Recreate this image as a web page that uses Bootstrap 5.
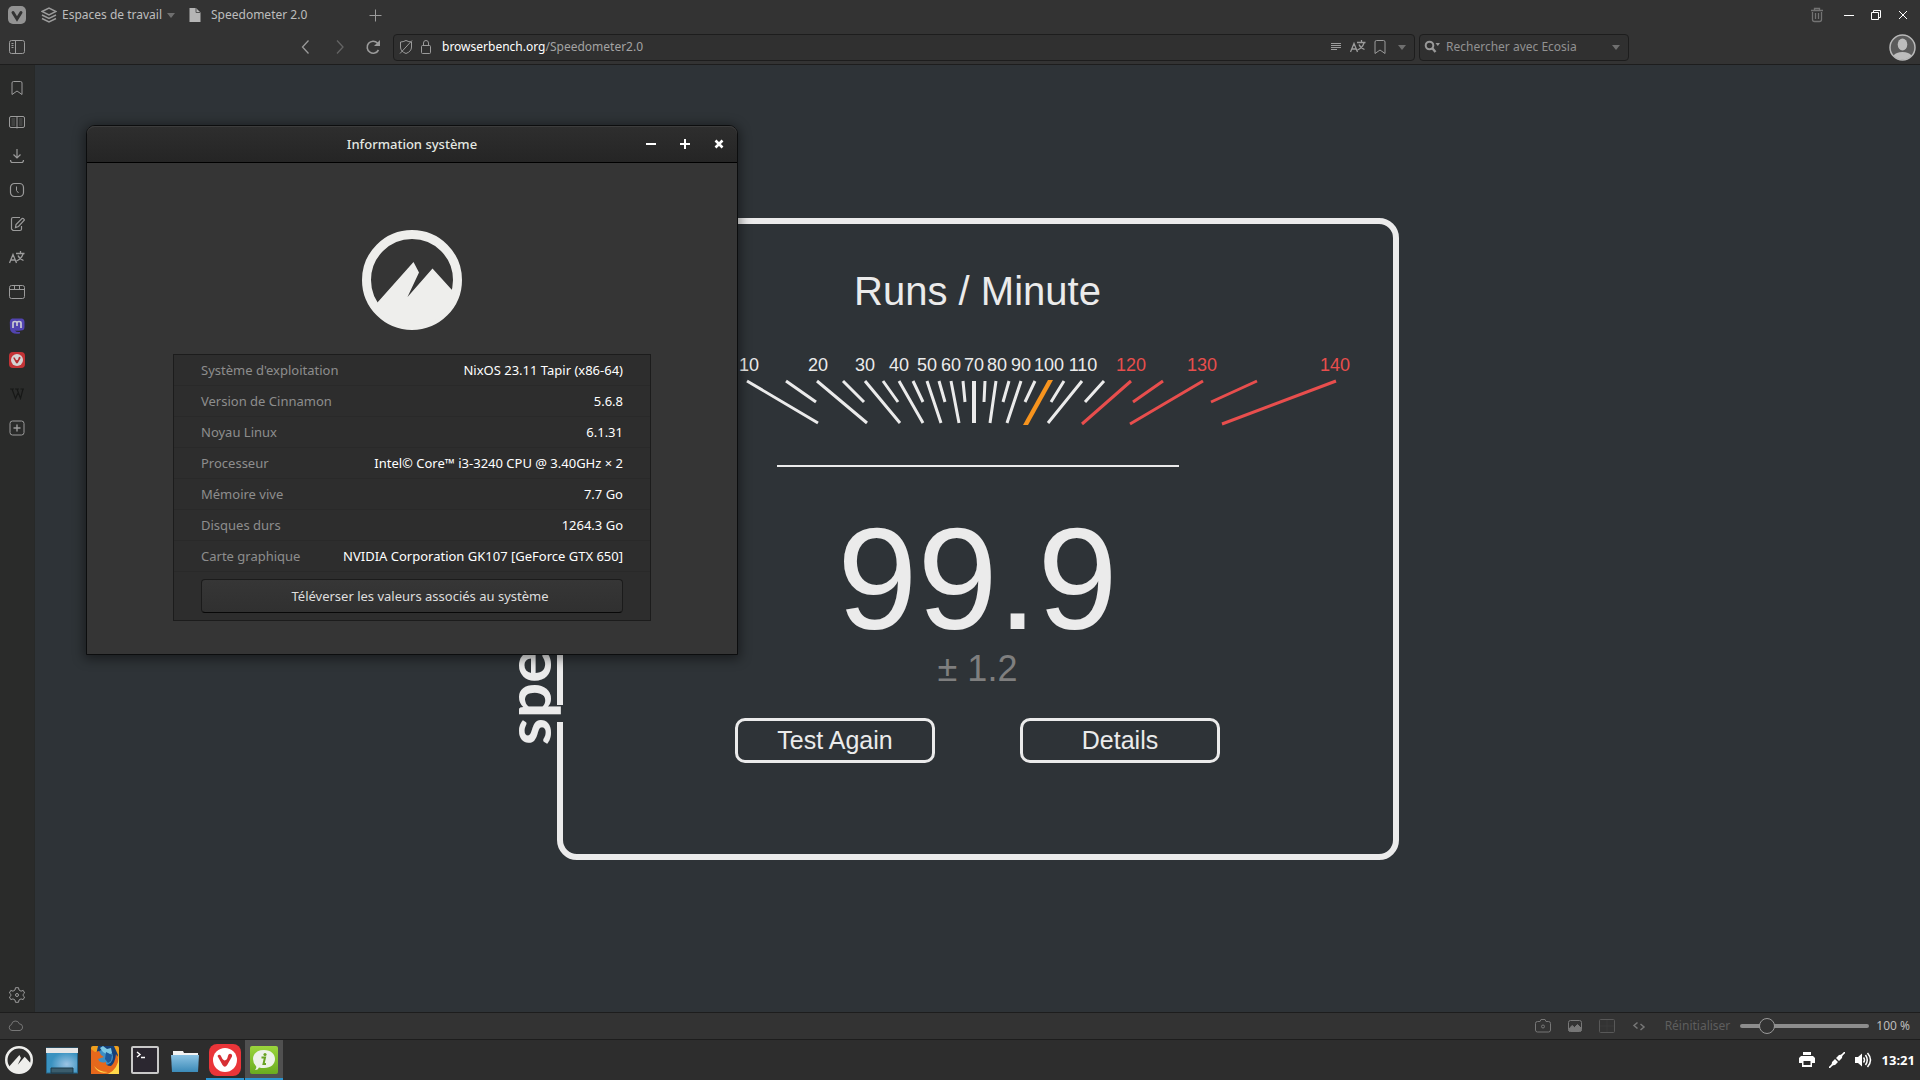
<!DOCTYPE html>
<html lang="fr" data-bs-theme="dark">
<head>
<meta charset="utf-8">
<meta name="viewport" content="width=device-width, initial-scale=1">
<title>Speedometer 2.0</title>
<link href="https://cdn.jsdelivr.net/npm/bootstrap@5.3.0/dist/css/bootstrap.min.css" rel="stylesheet">
<style>
:root { --fg: #ebebeb; --page: #2e3337; --chrome: #333333; --line: #1d1d1d; }
body { font-family: "Noto Sans", "Open Sans", sans-serif; font-size: 12px; line-height: 18px; color: #bdbdbd; background: var(--chrome); }
button { color: inherit; font: inherit; background: none; border: 0; padding: 0; }
svg { display: block; flex: none; }
.ico { width: 16px; height: 16px; fill: none; stroke: #9b9b9b; stroke-width: 1; }
.caret { width: 8px; height: 5px; fill: #6f6f6f; }
.tabstrip { height: 30px; padding: 0 6px 0 8px; }
.tabstrip .spaces { margin-left: 15px; gap: 5px; }
.tabstrip .page-tab { width: 162px; margin-left: 6px; padding-left: 6px; }
.toolbar { height: 34px; padding: 0 4px 0 9px; }
.nav-arrows { margin-left: 272px; gap: 18px; }
.field { height: 27px; border: 1px solid var(--line); border-radius: 4px; background: #303030; }
.field input { background: none; border: 0; outline: 0; color: #9a9a9a; padding: 0; min-width: 0; }
.field input::placeholder { color: #929292; opacity: 1; }
.address { margin-left: 12px; }
.page-tools { gap: 6px; }
.search { width: 210px; margin-right: 260px; gap: 6px; }
.host { color: #ffffff; }
.path { color: #a3a3a3; text-decoration: none; }
.wbtn { width: 23px; height: 20px; color: #fff; display: grid; place-items: center; }
.wbtn .ico { stroke: #ffffff; }
.side { width: 35px; background: #2a2b2a; border-right: 1px solid #272928; padding-top: 6px; }
.side button { width: 34px; height: 34px; display: grid; place-items: center; flex: none; }
.view { border-top: 1px solid var(--line); }
.meterpage { background: var(--page); font-family: "Liberation Sans", Arial, sans-serif; color: var(--fg); }
.frame { position: relative; width: 842px; height: 642px; border: 6px solid var(--fg); border-radius: 20px; padding-top: 44px; }
.frame h1 { font-size: 40px; line-height: 46px; font-weight: 400; margin: 0 0 31px; color: var(--fg); }
.gauge { width: 100%; height: 82px; stroke-width: 3; stroke: var(--fg); }
.gauge text { stroke: none; fill: var(--fg); font-family: "Liberation Sans", Arial, sans-serif; font-size: 18px; text-anchor: middle; }
.gauge .hot { stroke: #e84e4d; }
.gauge text.hot { stroke: none; fill: #e84e4d; }
.rule { width: 402px; height: 2px; background: var(--fg); margin: 38px auto 44px; }
.score { font-size: 144px; line-height: 137px; }
.delta { font-size: 36px; line-height: 42px; color: #7f7f7f; margin-bottom: 28px; }
.choices { gap: 85px; }
.choices button { width: 200px; height: 45px; border: 3px solid var(--fg); border-radius: 10px; font-size: 25px; line-height: 37px; color: var(--fg); }
.brand { position: absolute; right: 100%; bottom: 108px; margin-right: 4px; writing-mode: vertical-rl; transform: rotate(180deg); font-family: Lato, sans-serif; font-weight: 700; font-size: 62px; line-height: 64px; }
.notch { position: absolute; left: -6px; bottom: 132px; width: 6px; height: 17px; background: var(--page); }
.dialog-win { position: absolute; left: 86px; top: 125px; width: 652px; border: 1px solid #0c0d0e; border-radius: 9px 9px 0 0; background: #353535; box-shadow: 0 2px 12px 2px rgba(0,0,0,.45); color: #dedede; font-size: 13px; }
.dialog-win header { height: 37px; border-bottom: 1px solid #000; border-radius: 8px 8px 0 0; background: linear-gradient(#2e2e2e, #252525); box-shadow: inset 0 1px #3c3c3c; display: grid; grid-template-columns: 1fr auto 1fr; align-items: center; padding: 0 6px; }
.dialog-win h2 { font-size: 13px; line-height: 18px; font-weight: 500; margin: 0; color: #e4e8e2; grid-column: 2; }
.dialog-win header .ctl { gap: 10px; }
.dialog-win header button { width: 24px; height: 24px; display: grid; place-items: center; }
.dialog-win header .ico { stroke: #fff; stroke-width: 2; }
.dialog-body { padding: 67px 86px 33px; }
.cinn { width: 100px; height: 100px; margin: 0 auto 24px; }
.facts { background: #2d2d2d; border: 1px solid #1c1c1c; padding-bottom: 7px; }
.facts dl > div { height: 31px; padding: 0 27px; border-bottom: 1px solid #292929; }
.facts dt { font-weight: 400; color: #8d8d8d; }
.facts dd { margin: 0; color: #ffffff; }
.facts button { display: block; width: calc(100% - 54px); height: 34px; margin: 7px auto 0; padding-left: 16px; border: 1px solid #1b1b1b; border-bottom-color: #080808; border-radius: 4px; background: linear-gradient(#363636, #303030); }
.status { height: 27px; border-top: 1px solid var(--line); padding: 0 10px 0 8px; }
.status .ico { stroke: #777; }
.reset { color: #5e5e5e; margin: 0 10px 0 18px; }
.zoomer { appearance: none; width: 129px; height: 16px; background: none; margin: 0 7px 0 0; }
.zoomer::-webkit-slider-runnable-track { height: 4px; border-radius: 2px; background: #8d8d8d; }
.zoomer::-webkit-slider-thumb { appearance: none; width: 16px; height: 16px; margin-top: -6px; border-radius: 50%; background: #333; border: 1px solid #9a9a9a; }
.panelbar { height: 41px; border-top: 1px solid var(--line); background: #2d2d2d; padding: 0 5px 0 0; }
.task { width: 40px; height: 40px; display: grid; place-items: center; }
.task.menu { width: 38px; margin-right: 4px; }
.task.desk { margin-right: 3px; }
.task.open { width: 38px; margin-left: 1px; border-bottom: 2px solid #2a94d0; padding-top: 1px; }
.task.current { background: #505050; }
.tray { gap: 10px; }
.clock { color: #ffffff; font-weight: 700; font-size: 13px; }
</style>
</head>
<body class="vh-100 d-flex flex-column overflow-hidden">
<svg width="0" height="0" class="position-absolute" aria-hidden="true">
  <symbol id="cinnamon" viewBox="0 0 100 100"><circle cx="50" cy="50" r="45.500" fill="none" stroke="#eeeeec" stroke-width="9"/><path d="M15 73 51.500 32 57 42.500 45.500 67 70.500 38.500 90 60 93 65A45 45 0 0 1 15 79Z" fill="#eeeeec"/></symbol>
  <symbol id="translate" viewBox="0 0 16 16"><path d="M.5 13 4 4.500 7.500 13M2 10H6M7 3.500H15.500M11.500 1V3.500M14 4C13 7 11 9.500 7.500 11M9 5.500C10 8 12 9.500 14.500 10.500" stroke-width="1.300"/></symbol>
  <symbol id="bookmark" viewBox="0 0 16 16"><path d="M3 14.500V3Q3 1.500 4.500 1.500H11.500Q13 1.500 13 3V14.500L8 11Z"/></symbol>
  <symbol id="vmark" viewBox="0 0 32 32"><rect width="32" height="32" rx="8" fill="#ea3539"/><circle cx="16" cy="16" r="12" fill="#fff"/><path d="M8.500 12 13.500 21Q15.800 24.500 18.200 21L23 12.500A2 2 0 0 0 19.600 10.500C18.500 12 19 14 17.600 15.600Q15.500 17.500 13.500 15L11.700 11.400A1.900 1.900 0 0 0 8.500 12Z" fill="#d62f34"/></symbol>
</svg>

<nav class="tabstrip d-flex align-items-center flex-none" aria-label="Onglets">
  <button aria-label="Vivaldi"><svg width="18" height="18" viewBox="0 0 18 18"><rect width="18" height="18" rx="5" fill="#939393"/><path d="M5 6.500 9 13 13 6.500" fill="none" stroke="#333" stroke-width="3" stroke-linecap="round"/></svg></button>
  <button class="spaces d-flex align-items-center"><svg class="ico" viewBox="0 0 16 16"><path d="M1 4.500 8 1 15 4.500 8 8ZM1 8 8 11.500 15 8M1 11.500 8 15 15 11.500" stroke-width="1.500"/></svg>Espaces de travail<svg class="caret" viewBox="0 0 8 5"><path d="M0 0H8L4 5Z"/></svg></button>
  <button class="page-tab d-flex align-items-center"><svg class="me-2" width="16" height="16" viewBox="0 0 16 16"><path d="M2.500 1H9L13.500 5.500V15H2.500Z" fill="#b5b5b5"/><path d="M9 1V5.500H13.500" fill="none" stroke="#555"/></svg>Speedometer 2.0</button>
  <button aria-label="Nouvel onglet" class="ms-4"><svg class="ico" viewBox="0 0 16 16"><path d="M8.500 2.500V14.500M2.500 8.500H14.500"/></svg></button>
  <button aria-label="Corbeille" class="ms-auto me-2"><svg class="ico" viewBox="0 0 16 16"><path d="M2 3.500H14M5.500 3V1.500H10.500V3M3.500 5V12.500Q3.500 14.500 5.500 14.500H10.500Q12.500 14.500 12.500 12.500V5M6.500 6V12M9.500 6V12" stroke="#737373" stroke-width="1.300"/></svg></button>
  <button class="wbtn ms-1" aria-label="Réduire"><svg class="ico" viewBox="0 0 16 16"><path d="M3 8.500H13"/></svg></button>
  <button class="wbtn ms-1" aria-label="Restaurer"><svg class="ico" viewBox="0 0 16 16"><path d="M5.500 5.500V3.500H12.500V10.500H10.500M3.500 5.500H10.500V12.500H3.500Z"/></svg></button>
  <button class="wbtn ms-1" aria-label="Fermer"><svg class="ico" viewBox="0 0 16 16"><path d="M4 4 12 12M12 4 4 12"/></svg></button>
</nav>

<div class="toolbar d-flex align-items-center">
  <button aria-label="Panneau"><svg class="ico" viewBox="0 0 16 16"><rect x=".5" y="1.500" width="15" height="13" rx="2"/><path d="M6.500 2V14M2.500 4.500H4.500M2.500 6.500H4.500M2.500 8.500H4.500"/></svg></button>
  <div class="nav-arrows d-flex">
    <button aria-label="Précédent"><svg class="ico" viewBox="0 0 16 16"><path d="M11.500 1.500 5.500 8 11.500 14.500" stroke-width="1.300"/></svg></button>
    <button aria-label="Suivant"><svg class="ico" viewBox="0 0 16 16"><path d="M6 1.500 12 8 6 14.500" stroke="#646464" stroke-width="1.300"/></svg></button>
    <button aria-label="Recharger"><svg class="ico" viewBox="0 0 16 16"><path d="M13.500 11A6 6 0 1 1 12.500 4" stroke-width="1.600"/><path d="M15 1V7H9Z" fill="#9b9b9b" stroke="none"/></svg></button>
  </div>
  <div class="field address d-flex align-items-center flex-grow-1 px-1">
    <svg class="ico" viewBox="0 0 16 16"><path d="M8 1.500Q11 3 13.500 3V8Q13.500 12.500 8 14.500 2.500 12.500 2.500 8V3Q5 3 8 1.500ZM2 14.500 14 1.500"/></svg>
    <svg class="ico ms-1 me-2" viewBox="0 0 16 16"><rect x="3.500" y="6.500" width="9" height="8" rx="1"/><path d="M5.500 6V4Q5.500 1.500 8 1.500T10.500 4V6"/></svg>
    <a class="path" href="#"><span class="host">browserbench.org</span>/Speedometer2.0</a>
    <div class="page-tools d-flex align-items-center ms-auto">
      <svg class="ico" viewBox="0 0 16 16"><path d="M3 4.500H13M3 6.500H13M3 8.500H13M3 10.500H9"/></svg>
      <svg class="ico"><use href="#translate"/></svg>
      <svg class="ico"><use href="#bookmark"/></svg>
      <svg class="caret ms-1 me-1" viewBox="0 0 8 5"><path d="M0 0H8L4 5Z"/></svg>
    </div>
  </div>
  <label class="field search d-flex align-items-center ms-1 px-1">
    <svg width="16" height="16" viewBox="0 0 16 16"><circle cx="5.500" cy="6.500" r="3.800" fill="none" stroke="#999" stroke-width="2"/><path d="M8.500 9.500 11.500 13" stroke="#999" stroke-width="2.400"/><path d="M11.500 4H16L13.800 7Z" fill="#999"/></svg>
    <input class="flex-grow-1" type="search" placeholder="Rechercher avec Ecosia" aria-label="Rechercher avec Ecosia">
    <svg class="caret me-1" viewBox="0 0 8 5"><path d="M0 0H8L4 5Z"/></svg>
  </label>
  <button aria-label="Profil"><svg width="27" height="27" viewBox="0 0 27 27"><circle cx="13.500" cy="13.500" r="12.500" fill="#5b5b5b" stroke="#b9b9b9" stroke-width="1.500"/><ellipse cx="13.500" cy="10.500" rx="4.800" ry="6" fill="#bdbdbd"/><path d="M4.500 21.500Q7 18 13.500 18T22.500 21.500Q19 25.500 13.500 25.500T4.500 21.500Z" fill="#bdbdbd"/></svg></button>
</div>

<div class="view d-flex flex-grow-1">
  <aside class="side d-flex flex-column justify-content-between">
    <div class="d-flex flex-column">
      <button aria-label="Signets"><svg class="ico"><use href="#bookmark"/></svg></button>
      <button aria-label="Liste de lecture"><svg class="ico" viewBox="0 0 16 16"><path d="M8 2.500V14.500M8 2.500H2Q.5 2.500.5 4V12Q.5 13.500 2 13.500H14Q15.500 13.500 15.500 12V4Q15.500 2.500 14 2.500Z"/><path d="M2.500 5H6M2.500 7H6M2.500 9H6M2.500 11H6M10 5H13.500M10 7H13.500M10 9H13.500M10 11H13.500" opacity=".4"/></svg></button>
      <button aria-label="Téléchargements"><svg class="ico" viewBox="0 0 16 16"><path d="M8 1V9.500M4.500 6.500 8 10 11.500 6.500M1.500 12Q1.500 14.500 3.500 14.500H12.500Q14.500 14.500 14.500 12" stroke-width="1.200"/></svg></button>
      <button aria-label="Historique"><svg class="ico" viewBox="0 0 16 16"><rect x="1.500" y="1.500" width="13" height="13" rx="4" stroke-width="1.200"/><path d="M7.500 4.500V8.500L9.500 11"/></svg></button>
      <button aria-label="Notes"><svg class="ico" viewBox="0 0 16 16"><path d="M11 1.500H4Q2.500 1.500 2.500 3V13L4 14.500H11Q12.500 14.500 12.500 13V10M6.500 11.500 7 8.500 13 2.500Q14.500 2 15.500 4L9.500 10.500Z" stroke-width="1.200"/></svg></button>
      <button aria-label="Traduire"><svg class="ico"><use href="#translate"/></svg></button>
      <button aria-label="Fenêtre"><svg class="ico" viewBox="0 0 16 16"><rect x=".5" y="1.500" width="15" height="13" rx="2"/><path d="M.5 5.500H15.500M5.500 2V5.500M10.500 2V5.500"/></svg></button>
      <button aria-label="Mastodon"><svg width="16" height="16" viewBox="0 0 16 16"><path d="M3 .5H13Q15.500 1 15.500 4V9Q15.500 12.500 12 12.500 8 13 6 12.500 7 14.500 11 14V15.500Q2 17 1 11L.8 4Q.8 1 3 .5Z" fill="#5244b0"/><path d="M4 10V5Q4 3.500 6 3.500T8 5V8M8 5Q8 3.500 10 3.500T12 5V10" fill="none" stroke="#c9c9d3" stroke-width="1.700"/></svg></button>
      <button aria-label="Communauté Vivaldi"><svg width="16" height="16" opacity=".8"><use href="#vmark"/></svg></button>
      <button aria-label="Wikipédia"><svg width="14" height="12" viewBox="0 0 14 12"><path d="M0 1H4M5 1H9M10.500 1H14M2 1 5.500 10.500 8 5M7 1 10.500 10.500 13 1" fill="none" stroke="#171817" stroke-width="1.200"/></svg></button>
      <button aria-label="Ajouter"><svg class="ico" viewBox="0 0 16 16"><rect x="1" y="1" width="14" height="14" rx="2.500"/><path d="M8 4.500V11.500M4.500 8H11.500" stroke-width="1.400"/></svg></button>
    </div>
    <button aria-label="Paramètres"><svg class="ico" viewBox="0 0 16 16"><path d="M6.500.7H9.500L10 3 12 4.200 14.200 3.400 15.600 6 14 7.500V8.600L15.600 10 14.200 12.600 12 11.900 10 13 9.500 15.300H6.500L6 13 4 11.900 1.800 12.600.4 10 2 8.600V7.500L.4 6 1.800 3.400 4 4.200 6 3Z"/><circle cx="8" cy="8" r="1.500"/></svg></button>
  </aside>

  <main class="meterpage flex-grow-1 d-flex align-items-center justify-content-center">
    <section class="frame text-center">
      <span class="notch"></span><span class="brand">speedometer</span>
      <h1>Runs / Minute</h1>
      <svg class="gauge" viewBox="564 345 828 82">
        <g><text x="749" y="371">10</text><text x="818" y="371">20</text><text x="865" y="371">30</text><text x="899" y="371">40</text><text x="927" y="371">50</text><text x="951" y="371">60</text><text x="974" y="371">70</text><text x="997" y="371">80</text><text x="1021" y="371">90</text><text x="1049" y="371">100</text><text x="1083" y="371">110</text><text class="hot" x="1131" y="371">120</text><text class="hot" x="1202" y="371">130</text><text class="hot" x="1335" y="371">140</text></g>
        <path fill="none" d="M613 381 726 423M692 381 736 402M747 381 818 423M786 381 816 402M817 381 867 423M843 381 864 402M865 381 900 423M883 381 898 402M899 381 923 423M913 381 923 402M927 381 941 423M939 381 945 402M951 381 959 423M963 381 965 402M985 381 984 402M996 381 990 423M1009 381 1003 402M1021 381 1007 423M1035 381 1025 402M1064 381 1051 402M1082 381 1048 423M1104 381 1085 402"/>
        <path fill="none" stroke-width="4" d="M974 381V423"/>
        <path fill="none" class="hot" d="M1131 381 1082 424M1163 381 1133 402M1203 381 1130 424M1257 381 1211 402M1336 381 1222 424"/>
        <path fill="#f7941e" stroke="none" d="M1048 380H1053L1028 425H1023Z"/>
      </svg>
      <div class="rule"></div>
      <div class="score">99.9</div>
      <div class="delta">± 1.2</div>
      <div class="choices d-flex justify-content-center"><button>Test Again</button><button>Details</button></div>
    </section>
  </main>
</div>

<footer class="status d-flex align-items-center">
  <button aria-label="Synchronisation"><svg class="ico" viewBox="0 0 16 16"><path d="M4 12.500A3 3 0 0 1 3.500 6.600 4 4 0 0 1 11.300 5.800 3.400 3.400 0 0 1 12 12.500Z"/></svg></button>
  <div class="d-flex align-items-center ms-auto">
    <button aria-label="Capture"><svg class="ico" viewBox="0 0 16 16"><path d="M5 3.500 6 1.500H10L11 3.500H13.500Q15.500 3.500 15.500 5.500V12Q15.500 14 13.500 14H2.500Q.5 14 .5 12V5.500Q.5 3.500 2.500 3.500Z"/><circle cx="8" cy="8.500" r="1.500"/></svg></button>
    <button class="ms-3" aria-label="Images"><svg class="ico" viewBox="0 0 16 16"><rect x="1.500" y="2.500" width="13" height="11" rx="2"/><path d="M2 13V11L5 7.500 7.500 9.500 10.500 6.500 14 10V13Z" fill="#777"/></svg></button>
    <button class="ms-3" aria-label="Mosaïque"><svg class="ico" viewBox="0 0 16 16"><rect x=".5" y="1.500" width="15" height="13" rx="1" stroke="#585858"/><path d="M8 2V14M1 8H15" stroke="#3b3b3b"/></svg></button>
    <button class="ms-3" aria-label="Actions de page"><svg class="ico" viewBox="0 0 16 16"><path d="M6.500 4.500 3 7.500 6.500 10.500M9.500 6 13 9 9.500 12" stroke-width="1.500"/></svg></button>
    <button class="reset">Réinitialiser</button>
    <input class="zoomer" type="range" min="20" max="500" value="100" aria-label="Zoom">
    <span>100 %</span>
  </div>
</footer>

<div class="panelbar d-flex align-items-center">
  <button class="task menu" aria-label="Menu"><svg width="28" height="28"><use href="#cinnamon"/></svg></button>
  <button class="task desk" aria-label="Bureau"><svg width="32" height="28" viewBox="0 0 32 28"><defs><radialGradient id="dk" cx=".65" cy=".65"><stop offset="0" stop-color="#9cc4e4"/><stop offset="1" stop-color="#3a92c0"/></radialGradient></defs><rect x=".5" y="2" width="31" height="25" fill="url(#dk)" stroke="#27668a"/><rect width="32" height="5" y="2" fill="#e6e6e6"/><path d="M5 27V22H27V27Z" fill="#3b5d6d" stroke="#1c3b4b"/></svg></button>
  <button class="task" aria-label="Firefox"><svg width="28" height="28" viewBox="0 0 28 28"><rect width="28" height="28" rx="2" fill="#f0a01e"/><path d="M7 0H23L27 9 22 20 12 24 4 14Z" fill="#143f78"/><circle cx="14" cy="11" r="8" fill="#3d8fc6"/><path d="M12 0 16 3 20 2 21 7 17 9 12 6 9 2Z" fill="#7dc8e4"/><path d="M15 6 21 9 20 15 17 17 14 13Z" fill="#1c5a9c"/><path d="M0 3 4 6 8 5 10 9 13 11 7 13Q9 18 15 16 14 20 20 20 24 17 25 8 28 12 27 19 23 28 14 28H0Z" fill="#e6681c"/><path d="M28 6Q29 22 17 28H28ZM3 20Q8 26 17 26 8 29 3 20Z" fill="#ffd84a"/></svg></button>
  <button class="task" aria-label="Terminal"><svg width="28" height="28" viewBox="0 0 28 28"><rect width="28" height="28" rx="2" fill="#c9c9c9"/><rect x="2" y="2" width="24" height="24" fill="#2b2730"/><path d="M6 6 9 8.500 6 11M10 11.500H14" fill="none" stroke="#fff" stroke-width="1.400"/></svg></button>
  <button class="task" aria-label="Fichiers"><svg width="28" height="28" viewBox="0 0 28 28"><defs><linearGradient id="fo" x2="0" y2="1"><stop stop-color="#8cc3e3"/><stop offset="1" stop-color="#3b8ab8"/></linearGradient></defs><path d="M2 11V5H12L13 7H27V11Z" fill="#f3f3f3"/><path d="M0 9H28L27 26H1Z" fill="url(#fo)"/></svg></button>
  <button class="task open" aria-label="Vivaldi"><svg width="32" height="32"><use href="#vmark"/></svg></button>
  <button class="task open current" aria-label="Information système"><svg width="28" height="28" viewBox="0 0 28 28"><defs><linearGradient id="gr" x2="0" y2="1"><stop stop-color="#9bd53c"/><stop offset="1" stop-color="#6aab20"/></linearGradient></defs><rect width="28" height="28" rx="2" fill="url(#gr)"/><path d="M14 4C21 4 25 8 25 13S21 22 14 22Q11 22 9 21.500 8 24 5 24 7 22 6 20 3 17 3 13C3 8 7 4 14 4Z" fill="#eef2ea"/><circle cx="15" cy="8.500" r="1.600" fill="#69a324"/><path d="M11.500 11.500H15L13.500 18H16" fill="none" stroke="#69a324" stroke-width="2"/></svg></button>
  <div class="tray d-flex align-items-center ms-auto">
    <svg width="16" height="16" viewBox="0 0 16 16" fill="#fff"><path d="M4 0H12V3H4ZM2 4H14L16 6V11H13V15H3V11H0V6Z"/><path d="M4.500 9H11.500V13H4.500Z" fill="#2d2d2d"/></svg>
    <svg class="ms-1" width="16" height="16" viewBox="0 0 16 16"><path d="M0 16 4 12M12 4 16 0" stroke="#fff" stroke-width="1.600"/><path d="M3 10 6 7 9 10 6 13 2.500 13.500ZM7 6 10 3 13.500 2.500 13 6 10 9Z" fill="#fff"/></svg>
    <svg width="17" height="16" viewBox="0 0 17 16"><path d="M0 5H3L7 1.500V14.500L3 11H0Z" fill="#fff"/><path d="M8.500 5.500Q10.500 8 8.500 10.500M10.500 3Q14 8 10.500 13M12.500 1Q18.500 8 12.500 15" fill="none" stroke="#fff" stroke-width="1.500"/></svg>
    <time class="clock">13:21</time>
  </div>
</div>

<section class="dialog-win" aria-labelledby="dlg">
  <header>
    <h2 id="dlg">Information système</h2>
    <div class="ctl d-flex justify-content-end">
      <button aria-label="Réduire"><svg class="ico" viewBox="0 0 16 16"><path d="M3 8H13"/></svg></button>
      <button aria-label="Agrandir"><svg class="ico" viewBox="0 0 16 16"><path d="M3 8H13M8 3V13"/></svg></button>
      <button aria-label="Fermer"><svg class="ico" viewBox="0 0 16 16"><path d="M4.500 4.500 11.500 11.500M11.500 4.500 4.500 11.500" stroke-width="2.600"/></svg></button>
    </div>
  </header>
  <div class="dialog-body">
    <svg class="cinn"><use href="#cinnamon"/></svg>
    <div class="facts">
      <dl class="m-0">
        <div class="d-flex align-items-center justify-content-between"><dt>Système d'exploitation</dt><dd>NixOS 23.11 Tapir (x86-64)</dd></div>
        <div class="d-flex align-items-center justify-content-between"><dt>Version de Cinnamon</dt><dd>5.6.8</dd></div>
        <div class="d-flex align-items-center justify-content-between"><dt>Noyau Linux</dt><dd>6.1.31</dd></div>
        <div class="d-flex align-items-center justify-content-between"><dt>Processeur</dt><dd>Intel© Core™ i3-3240 CPU @ 3.40GHz × 2</dd></div>
        <div class="d-flex align-items-center justify-content-between"><dt>Mémoire vive</dt><dd>7.7 Go</dd></div>
        <div class="d-flex align-items-center justify-content-between"><dt>Disques durs</dt><dd>1264.3 Go</dd></div>
        <div class="d-flex align-items-center justify-content-between"><dt>Carte graphique</dt><dd>NVIDIA Corporation GK107 [GeForce GTX 650]</dd></div>
      </dl>
      <button>Téléverser les valeurs associés au système</button>
    </div>
  </div>
</section>
<script src="https://cdn.jsdelivr.net/npm/bootstrap@5.3.0/dist/js/bootstrap.bundle.min.js"></script>
</body>
</html>
